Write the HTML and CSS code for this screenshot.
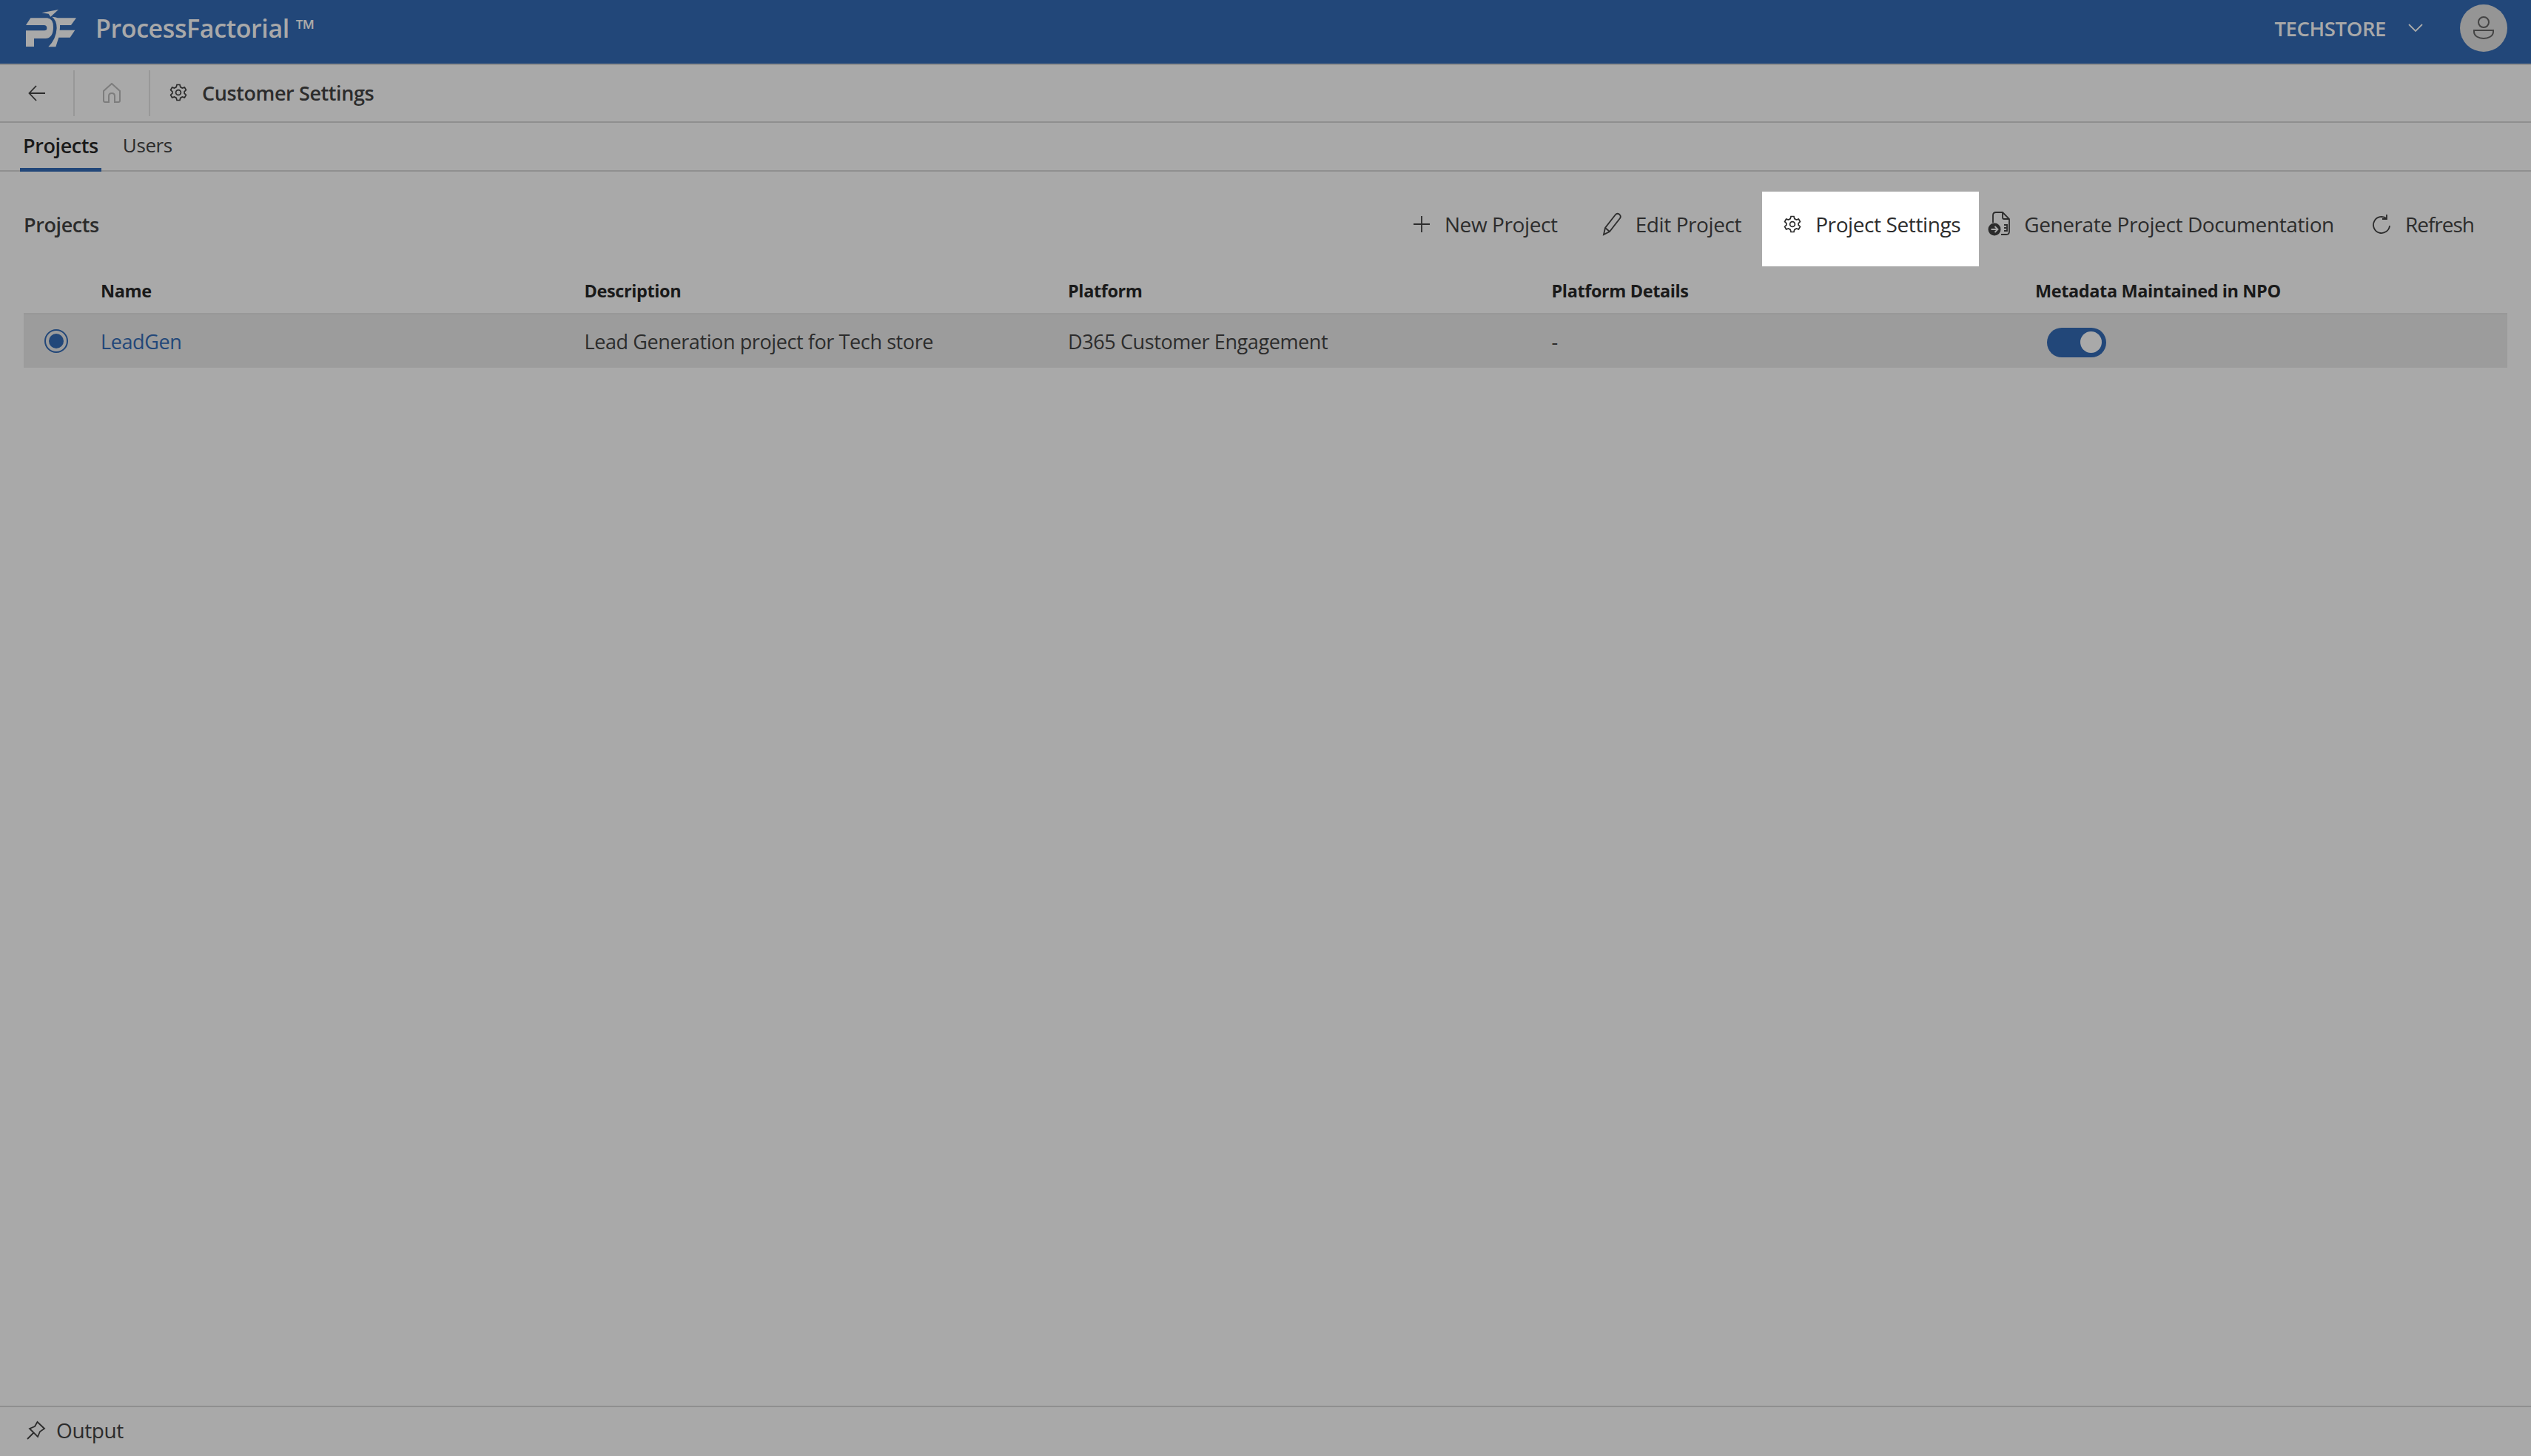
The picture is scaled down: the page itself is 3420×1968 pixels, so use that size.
FILE: index.html
```html
<!DOCTYPE html>
<html lang="en">
<head>
  <meta charset="UTF-8" />
  <title>ProcessFactorial – Customer Settings</title>
  <link rel="stylesheet" href="styles.css">
</head>
<body>
  <header class="topbar">
    <div class="brand">
      <svg class="logo" viewBox="18 0 240 192" width="80" height="64" fill="#a9a9a9">
        <path d="M165 21 L97 34 L125 38 L133 50 Z"/>
        <path d="M52 55 H120 Q144 58 144 92 Q144 136 112 138 H66 V171 H33 V106 H108 Q118 106 118 96 Q118 84 106 84 H33 Z"/>
        <path d="M139 50 Q158 64 158 96 Q156 140 124 172 H154 L166 134 H212 L232 104 H170 Q172 94 171 84 H216 L237 55 H162 Q152 50 139 50 Z"/>
      </svg>
      <span class="brand-name">ProcessFactorial ™</span>
    </div>
    <div class="account">
      <span class="org">TECHSTORE</span>
      <svg class="chevron" viewBox="0 0 20 12" width="20" height="12"><path d="M1 1 L10 10 L19 1" fill="none" stroke="#a9a9a9" stroke-width="1.8"/></svg>
      <div class="avatar">
        <svg viewBox="0 0 30 32" width="30" height="32" fill="none" stroke="#444" stroke-width="2">
          <circle cx="15" cy="8" r="7"/>
          <path d="M2 19 H28 V21 C28 27 21 30 15 30 C9 30 2 27 2 21 Z"/>
        </svg>
      </div>
    </div>
  </header>

  <nav class="crumbs">
    <div class="crumb crumb-back">
      <svg viewBox="0 0 24 22" width="24" height="22" fill="none" stroke="#2c2c2c" stroke-width="1.8"><path d="M11 1 L1.5 11 L11 21 M1.5 11 H23"/></svg>
    </div>
    <div class="crumb crumb-home">
      <svg viewBox="0 0 26 28" width="26" height="28" fill="none" stroke="#7d7d7d" stroke-width="2"><path d="M9 26 H4 Q2 26 2 24 V11 L13 1 L24 11 V24 Q24 26 22 26 H17 V18 Q17 14 13 14 Q9 14 9 18 Z"/></svg>
    </div>
    <div class="crumb-title">
      <svg class="gear" viewBox="0 0 24 24" width="24" height="24" fill="none" stroke="#2c2c2c" stroke-width="1.7"><path d="M10 1.5 H14 L14.8 4.6 L17.3 6 L20.4 5.1 L22.4 8.6 L20.1 10.8 V13.2 L22.4 15.4 L20.4 18.9 L17.3 18 L14.8 19.4 L14 22.5 H10 L9.2 19.4 L6.7 18 L3.6 18.9 L1.6 15.4 L3.9 13.2 V10.8 L1.6 8.6 L3.6 5.1 L6.7 6 L9.2 4.6 Z"/><circle cx="12" cy="12" r="3.4"/></svg>
      <span>Customer Settings</span>
    </div>
  </nav>

  <div class="tabs">
    <div class="tab tab-active">Projects</div>
    <div class="tab">Users</div>
  </div>

  <main class="content">
    <section class="section-head">
      <h2>Projects</h2>
      <div class="actions">
        <div class="action">
          <svg viewBox="0 0 24 24" width="24" height="24" fill="none" stroke="#2c2c2c" stroke-width="1.8"><path d="M12 1 V23 M1 12 H23"/></svg>
          <span>New Project</span>
        </div>
        <div class="action action-edit">
          <svg viewBox="0 0 28 32" width="28" height="32" fill="none" stroke="#2c2c2c" stroke-width="1.8"><path d="M2 30 L4 21 L18 3 Q20 0.6 23 2.6 Q26 5 24 8 L10 26 Z M4 21 L10 26"/></svg>
          <span>Edit Project</span>
        </div>
        <div class="action action-highlight">
          <svg viewBox="0 0 24 24" width="24" height="24" fill="none" stroke="#2c2c2c" stroke-width="1.7"><path d="M10 1.5 H14 L14.8 4.6 L17.3 6 L20.4 5.1 L22.4 8.6 L20.1 10.8 V13.2 L22.4 15.4 L20.4 18.9 L17.3 18 L14.8 19.4 L14 22.5 H10 L9.2 19.4 L6.7 18 L3.6 18.9 L1.6 15.4 L3.9 13.2 V10.8 L1.6 8.6 L3.6 5.1 L6.7 6 L9.2 4.6 Z"/><circle cx="12" cy="12" r="3.4"/></svg>
          <span>Project Settings</span>
        </div>
        <div class="action action-doc">
          <svg viewBox="0 0 32 36" width="32" height="36" fill="none" stroke="#2c2c2c" stroke-width="1.8"><path d="M7 16 V6 Q7 2 11 2 H20 L29 11 V28 Q29 32 25 32 H18 M20 2 V9 Q20 11 22 11 H29 M22 19 H26 V27 H22 M22 23 H25"/><circle cx="9" cy="25" r="8.5" fill="#2c2c2c" stroke="none"/><path d="M4.5 25 H13 M9.5 21 L13.5 25 L9.5 29" stroke="#a9a9a9"/></svg>
          <span>Generate Project Documentation</span>
        </div>
        <div class="action action-refresh">
          <svg viewBox="0 0 26 26" width="26" height="26" fill="none" stroke="#2c2c2c" stroke-width="1.8"><path d="M20 5.5 A11 11 0 1 0 24 15 M20 0 V6 H14"/></svg>
          <span>Refresh</span>
        </div>
      </div>
    </section>

    <div class="table">
      <div class="row row-head">
        <div class="cell-radio"></div>
        <div class="cell">Name</div>
        <div class="cell">Description</div>
        <div class="cell">Platform</div>
        <div class="cell">Platform Details</div>
        <div class="cell">Metadata Maintained in NPO</div>
      </div>
      <div class="row row-selected">
        <div class="cell-radio"><span class="radio"></span></div>
        <div class="cell"><a class="link">LeadGen</a></div>
        <div class="cell">Lead Generation project for Tech store</div>
        <div class="cell">D365 Customer Engagement</div>
        <div class="cell">-</div>
        <div class="cell"><span class="toggle"></span></div>
      </div>
    </div>
  </main>

  <footer class="output">
    <svg viewBox="0 0 26 26" width="26" height="26" fill="none" stroke="#2c2c2c" stroke-width="1.8"><path d="M1 25 L9 17 M14.5 2 L24 11 L18 15 L15 22 L4 11 L11 8 Z"/></svg>
    <span>Output</span>
  </footer>
</body>
</html>
```

FILE: styles.css
```css
* {
  box-sizing: border-box;
}

html, body {
  height: 100%;
}

body {
  margin: 0;
  display: flex;
  flex-direction: column;
  background: #a9a9a9;
  color: #2c2c2c;
  font-family: 'Open Sans', 'Noto Sans', sans-serif;
  font-size: 27px;
  letter-spacing: -0.4px;
}

svg {
  display: block;
  flex: none;
}

.topbar {
  height: 88px;
  flex: none;
  display: flex;
  align-items: center;
  justify-content: space-between;
  padding: 0 32px 10px 30px;
  background: #224779;
  border-bottom: 2px solid #8f8f8f;
  color: #a9a9a9;
}

.brand {
  display: flex;
  align-items: center;
  gap: 19px;
}

.brand-name {
  font-size: 34px;
  font-weight: 600;
}

.account {
  display: flex;
  align-items: center;
}

.org {
  font-size: 27.5px;
  font-weight: 600;
}

.chevron {
  margin-left: 30px;
}

.avatar {
  width: 64px;
  height: 64px;
  margin-left: 50px;
  border-radius: 50%;
  background: #959595;
  display: flex;
  align-items: center;
  justify-content: center;
}

.crumbs {
  height: 78px;
  flex: none;
  display: flex;
  align-items: center;
  border-bottom: 2px solid #8f8f8f;
}

.crumb {
  height: 62px;
  display: flex;
  align-items: center;
  justify-content: center;
  border-right: 2px solid #989898;
}

.crumb-back {
  width: 101px;
}

.crumb-home {
  width: 102px;
}

.crumb-title {
  display: flex;
  align-items: center;
  gap: 20px;
  padding: 0 0 2px 26px;
  font-size: 27px;
  font-weight: 600;
}

.tabs {
  height: 66px;
  flex: none;
  display: flex;
  padding-left: 27px;
  gap: 25px;
  border-bottom: 2px solid #8f8f8f;
}

.tab {
  padding: 12px 4px 0;
  font-size: 26px;
}

.tab-active {
  height: 66px;
  font-size: 27px;
  font-weight: 600;
  color: #1a1a1a;
  border-bottom: 5px solid #224779;
}

.content {
  flex: 1;
  padding: 27px 32px 0;
}

.section-head {
  height: 101px;
  display: flex;
  align-items: center;
  justify-content: space-between;
}

.section-head h2 {
  margin: 0 0 13px;
  font-size: 27px;
  font-weight: 600;
}

.actions {
  display: flex;
  align-items: center;
  height: 101px;
  padding-right: 23px;
}

.action {
  height: 100%;
  display: flex;
  align-items: center;
  gap: 19px;
  padding: 0 22px 13px 29px;
  font-size: 28px;
  font-weight: 500;
}

.action-edit {
  gap: 17px;
  margin-left: 9px;
}

.action-highlight {
  margin-left: 6px;
  padding-right: 25px;
  background: #fff;
}

.action-doc {
  gap: 17px;
  padding-left: 12px;
}

.action-refresh {
  letter-spacing: -1px;
}

.table {
  margin-top: 3px;
}

.row {
  display: grid;
  grid-template-columns: 104px repeat(5, 653.5px);
  align-items: center;
}

.row-head {
  height: 60px;
  font-size: 23.5px;
  font-weight: 700;
  color: #1a1a1a;
}

.row-selected {
  height: 74px;
  background: #9c9c9c;
  border-top: 2px solid #989898;
}

.cell-radio {
  display: flex;
  justify-content: center;
  padding-right: 16px;
}

.radio {
  width: 32px;
  height: 32px;
  border-radius: 50%;
  border: 2px solid #224779;
  padding: 4px;
  background: #224779;
  background-clip: content-box;
}

.link {
  color: #224779;
}

.toggle {
  display: block;
  position: relative;
  width: 80px;
  height: 40px;
  margin: 3px 0 0 16px;
  border-radius: 20px;
  background: #224779;
}

.toggle::after {
  content: "";
  position: absolute;
  top: 5px;
  right: 6px;
  width: 29px;
  height: 29px;
  border-radius: 50%;
  background: #a9a9a9;
}

.output {
  height: 68px;
  flex: none;
  display: flex;
  align-items: center;
  gap: 14px;
  padding: 0 0 4px 36px;
  border-top: 2px solid #8f8f8f;
  font-size: 28px;
}
```
